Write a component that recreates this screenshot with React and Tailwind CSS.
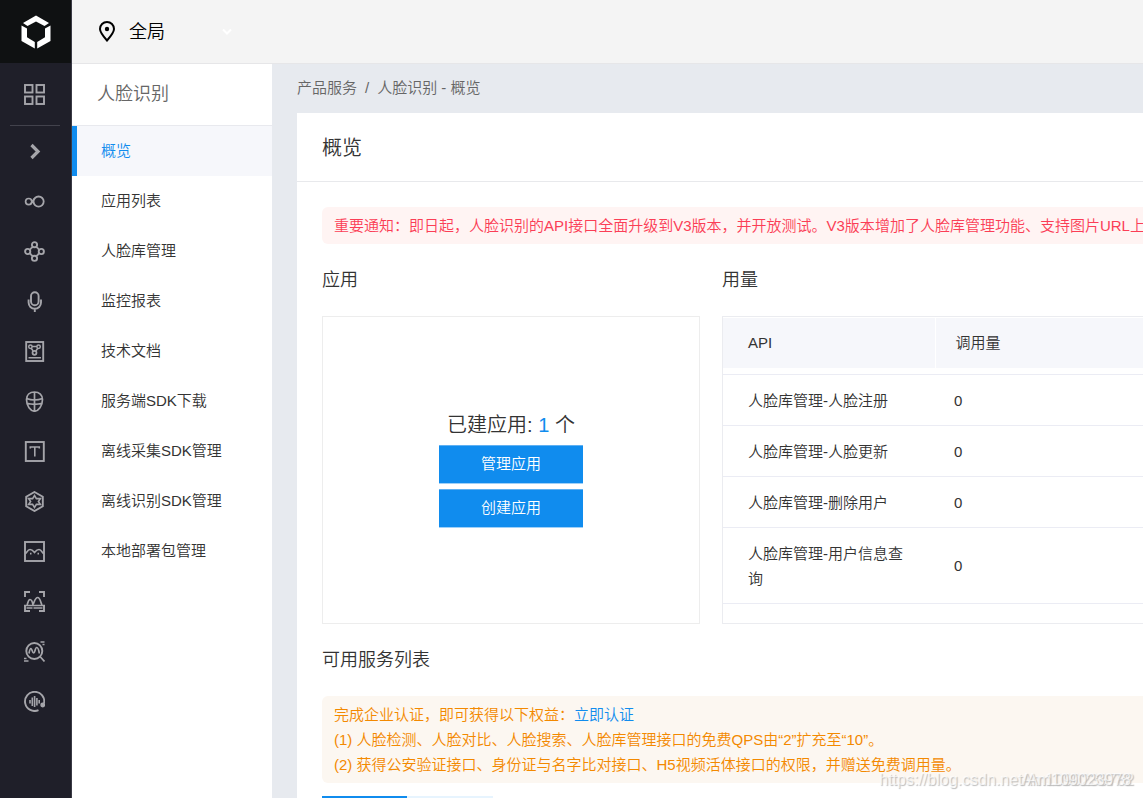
import React from "react";

const Icon = ({ children }) => (
  <svg width="21" height="21" viewBox="0 0 21 21" fill="none" stroke="currentColor" strokeWidth="1.9" aria-hidden="true">
    {children}
  </svg>
);

const products = [
  { label: "infinity", icon: (
    <Icon><circle cx="4.700" cy="10.600" r="3.100" strokeWidth="1.700" /><circle cx="14.600" cy="10.600" r="5.100" strokeWidth="1.800" /><path d="M6.300 13.200C8 12.200 8.800 9.500 10.400 7.600M7 8.500l2.800 3.500" strokeWidth="1.500" /></Icon>
  ) },
  { label: "knowledge graph", icon: (
    <Icon><circle cx="10.5" cy="10.5" r="4.600" /><g fill="#1f1f29"><circle cx="10.5" cy="3.700" r="2.600" /><circle cx="10.5" cy="17.300" r="2.600" /><circle cx="3.700" cy="10.5" r="2.600" /><circle cx="17.300" cy="10.5" r="2.600" /></g></Icon>
  ) },
  { label: "speech", icon: (
    <Icon><rect x="7" y="1.200" width="7.600" height="13" rx="3.800" /><path d="M4.600 8.500v3.100a6.200 6.200 0 0 0 12.400 0V8.500M10.800 17.500v3.500" /></Icon>
  ) },
  { label: "document", icon: (
    <Icon><rect x="2.200" y="1" width="17" height="19" /><circle cx="6.400" cy="5.800" r="1.700" strokeWidth="1.500" /><circle cx="14.600" cy="5.800" r="1.700" strokeWidth="1.500" /><circle cx="10.500" cy="11.800" r="2" strokeWidth="1.700" /><path d="M8 5.600h5M7.200 7.200l2 2.800M13.800 7.200l-2 2.800M4.500 16.700h12.500" strokeWidth="1.500" /></Icon>
  ) },
  { label: "face", icon: (
    <Icon><path d="M10.500 1C5.600 1 2.500 4 2.500 8.500c0 6.500 4 11.700 8 11.700s8-5.200 8-11.700C18.500 4 15.400 1 10.500 1zM10.500 1v19M2.500 7.500q8 3 16 0M3 12.300q7.500 2 15 0" strokeWidth="1.700" /></Icon>
  ) },
  { label: "text", icon: (
    <Icon><rect x="1.800" y="1" width="18" height="19" /><path d="M6.300 7.500V6h9v1.500M10.800 6v9.500" strokeWidth="1.600" /></Icon>
  ) },
  { label: "hexagon", icon: (
    <Icon><path d="M10.500 1l8.300 4.700v9.600l-8.300 4.700-8.300-4.700V5.700z" /><path d="M10.500 4.500l1.900 3.100h4l-2 2.900 2 2.900h-4l-1.900 3.100-1.900-3.100h-4l2-2.900-2-2.900h4z" strokeWidth="1.600" /></Icon>
  ) },
  { label: "image", icon: (
    <Icon><rect x="1" y="1" width="19" height="19" /><path d="M1 12.500c2.500 0 1.800-4 5-4 2.500 0 3 1.200 4.500 3C12 9.700 12.500 8.500 15 8.500c3.200 0 2.500 4 5 4M6 12.700h1.500M13.500 12.700H15" strokeWidth="1.700" /></Icon>
  ) },
  { label: "scan", icon: (
    <Icon><path d="M1 6V1h5M15 1h5v5M1 15v5h5M15 20h5v-5" /><path d="M0 14.500h21M2.500 17h6M9.500 17h9" strokeWidth="1.500" /><path d="M3 14c1-1.500 1-5.500 3-5.500S8.500 11 9 14M9 13.500c1.500-2.500 2-7 4.700-7S16.500 12 18 14" strokeWidth="1.700" /></Icon>
  ) },
  { label: "search", icon: (
    <Icon><circle cx="10.300" cy="10" r="8" /><path d="M16 15.500l4.500 5M5 12.500c.5-3 1-5 2-5s1.300 4.500 2.700 4.500 1.300-5.500 3-5.500S14.800 9 15.300 12.500M16.500 1h4M18.500 3.500h2M0 17.500h2.500M0 20h4.500" strokeWidth="1.700" /></Icon>
  ) },
  { label: "audio", icon: (
    <Icon><path d="M14.500 19.200A9.600 9.600 0 1 1 20 12.500" /><circle cx="18.700" cy="14" r="1.500" fill="currentColor" /><path d="M6 9v3.500M8.300 6.500v8.500M10.600 5v11M12.900 7v7.500M15.200 9v3.500" strokeWidth="1.600" /></Icon>
  ) },
];

const menu = ["概览", "应用列表", "人脸库管理", "监控报表", "技术文档", "服务端SDK下载", "离线采集SDK管理", "离线识别SDK管理", "本地部署包管理"];

const usage = ["人脸库管理-人脸注册", "人脸库管理-人脸更新", "人脸库管理-删除用户", "人脸库管理-用户信息查询"];

function ProductRail() {
  return (
    <nav className="flex w-[72px] shrink-0 flex-col border-r border-[#3a3a45] bg-[#1f1f29] text-[#a5a5aa]">
      <a href="#" aria-label="首页" className="flex h-[63px] shrink-0 items-center justify-center bg-[#0f1112]">
        <svg width="30" height="34" viewBox="0 0 30 34" fill="#fff" aria-hidden="true">
          <path d="M15 0.500L28 8l-4.500 3L15 6.500 6.500 11 2 8z" />
          <path d="M0.500 10.500L6 13.500v8.800l7.800 4.700V33.500L0.500 26z" />
          <path d="M29.500 10.500L24 13.500v8.800l-7.800 4.700V33.500L29.500 26z" />
        </svg>
      </a>
      <button aria-label="控制台" className="flex h-[62px] w-[69px] shrink-0 items-center justify-center">
        <Icon>
          <rect x="1" y="1" width="7.500" height="7.500" />
          <rect x="12.500" y="1" width="7.500" height="7.500" />
          <rect x="1" y="12.500" width="7.500" height="7.500" />
          <rect x="12.500" y="12.500" width="7.500" height="7.500" />
        </Icon>
      </button>
      <div className="ml-2.5 h-px w-[50px] shrink-0 bg-[#42424c]" />
      <button aria-label="展开" className="flex h-[50px] w-[69px] shrink-0 items-center justify-center">
        <svg width="21" height="21" viewBox="0 0 21 21" fill="none" stroke="currentColor" strokeWidth="3.200" aria-hidden="true">
          <path d="M7.500 4l6.500 6.500L7.500 17" />
        </svg>
      </button>
      {products.map((p) => (
        <button key={p.label} aria-label={p.label} className="flex h-[50px] w-[69px] shrink-0 items-center justify-center">
          {p.icon}
        </button>
      ))}
    </nav>
  );
}

function TopBar() {
  return (
    <header className="flex h-16 shrink-0 items-center border-b border-[#e6e6e8] bg-[#f4f4f4] pl-[26px] text-black">
      <button className="flex items-center text-lg">
        <svg width="18" height="22" viewBox="0 0 18 22" fill="none" stroke="currentColor" strokeWidth="2" aria-hidden="true">
          <path d="M9 19.500C5 15 2 11.500 2 8a7 7 0 0 1 14 0C16 11.500 13 15 9 19.500z" />
          <circle cx="9" cy="8" r="2.200" fill="currentColor" stroke="none" />
        </svg>
        <span className="ml-[13px]">全局</span>
        <svg className="ml-14" width="12" height="8" viewBox="0 0 12 8" fill="none" stroke="#fff" strokeWidth="2" aria-hidden="true">
          <path d="M2 1.500l4 4 4-4" />
        </svg>
      </button>
    </header>
  );
}

function SideMenu() {
  return (
    <nav className="w-[200px] shrink-0 bg-white">
      <h1 className="h-[62px] border-b border-[#e8e9ee] pl-[25px] text-lg leading-[60px] text-[#666]">人脸识别</h1>
      <ul>
        {menu.map((m, i) => (
          <li key={m}>
            <a
              href="#"
              className={
                i === 0
                  ? "block border-l-[5px] border-[#108cee] bg-[#f6f7fb] pl-6 leading-[50px] text-[#108cee]"
                  : "block border-l-[5px] border-transparent pl-6 leading-[50px] text-[#333]"
              }
            >
              {m}
            </a>
          </li>
        ))}
      </ul>
    </nav>
  );
}

function UsageTable() {
  return (
    <div className="flex-1 border border-r-0 border-[#ebecf0] pt-px">
      <table className="w-full table-fixed text-left">
        <thead>
          <tr className="h-[50px] bg-[#f6f7fb]">
            <th className="w-[212px] border-r border-white pl-[25px] font-[350]">API</th>
            <th className="pl-5 font-[350]">调用量</th>
          </tr>
        </thead>
        <tbody>
          <tr aria-hidden="true" className="h-1.5 border-b border-[#ebecf4]">
            <td colSpan={2} />
          </tr>
          {usage.map((name) => (
            <tr key={name} className="border-b border-[#ebecf4] leading-[25px]">
              <td className="pt-[13px] pr-5 pb-3 pl-[25px]">{name}</td>
              <td className="pt-[13px] pb-3 pl-[19px]">0</td>
            </tr>
          ))}
        </tbody>
      </table>
    </div>
  );
}

function Watermark() {
  return (
    <div className="pointer-events-none absolute right-[9px] bottom-1.5 text-base leading-6 font-normal text-white/70 [text-shadow:1px_1px_1px_#bbb]">
      <div className="relative">
        <span>Am1090239782</span>
        <span className="absolute top-0 right-[3px] whitespace-nowrap">https://blog.csdn.net/Am109023978</span>
      </div>
    </div>
  );
}

export default function App() {
  return (
    <div
      lang="zh-CN"
      className="relative flex h-screen overflow-hidden bg-[#e7eaef] font-['Liberation_Sans','Noto_Sans_CJK_SC',sans-serif] text-[15px] font-[350] text-[#333]"
    >
      <ProductRail />
      <div className="flex min-w-0 flex-1 flex-col">
        <TopBar />
        <div className="flex min-h-0 flex-1">
          <SideMenu />
          <main className="min-w-0 flex-1 overflow-hidden pl-[25px]">
            <div className="flex h-[49px] items-center gap-2 text-[#666]">
              <a href="#">产品服务</a>
              <span>/</span>
              <span>人脸识别 - 概览</span>
            </div>
            <section className="bg-white">
              <h2 className="h-[69px] border-b border-[#e8e9ec] pl-[25px] text-xl leading-[70px]">概览</h2>
              <div className="pt-[25px] pl-[25px]">
                <p className="rounded-l-md bg-[#fff4f3] py-1.5 pl-3 leading-[25px] whitespace-nowrap text-[#fb3e56]">
                  重要通知：即日起，人脸识别的API接口全面升级到V3版本，并开放测试。V3版本增加了人脸库管理功能、支持图片URL上
                </p>
                <div className="flex gap-[22px]">
                  <div className="flex w-[378px] shrink-0 flex-col">
                    <h3 className="text-lg leading-[72px]">应用</h3>
                    <div className="flex flex-1 flex-col items-center border border-[#ededed] pt-[92px]">
                      <p className="text-xl leading-8">
                        已建应用: <span className="text-[#108cee]">1</span> 个
                      </p>
                      <div className="mt-1 flex w-36 flex-col gap-[5px]">
                        <button className="h-[39px] border-t border-b border-t-[#5fb0f2] border-b-[#9fd0f8] bg-[#108cee] text-white">管理应用</button>
                        <button className="h-[39px] border-t border-b border-t-[#5fb0f2] border-b-[#9fd0f8] bg-[#108cee] text-white">创建应用</button>
                      </div>
                    </div>
                  </div>
                  <div className="flex h-[380px] min-w-0 flex-1 flex-col">
                    <h3 className="text-lg leading-[72px]">用量</h3>
                    <UsageTable />
                  </div>
                </div>
                <h3 className="text-lg leading-[72px]">可用服务列表</h3>
                <div className="rounded-l-md bg-[#fcf7f1] py-1.5 pl-3 leading-[25px] whitespace-nowrap text-[#f38900]">
                  <p>
                    完成企业认证，即可获得以下权益：<a href="#" className="text-[#108cee]">立即认证</a>
                  </p>
                  <p>(1) 人脸检测、人脸对比、人脸搜索、人脸库管理接口的免费QPS由“2”扩充至“10”。</p>
                  <p>(2) 获得公安验证接口、身份证与名字比对接口、H5视频活体接口的权限，并赠送免费调用量。</p>
                </div>
                <div className="mt-[13px] flex h-10">
                  <div className="w-[85px] bg-[#108cee]" />
                  <div className="w-[86px] bg-[#e7f4fe]" />
                </div>
              </div>
            </section>
          </main>
        </div>
      </div>
      <Watermark />
    </div>
  );
}
